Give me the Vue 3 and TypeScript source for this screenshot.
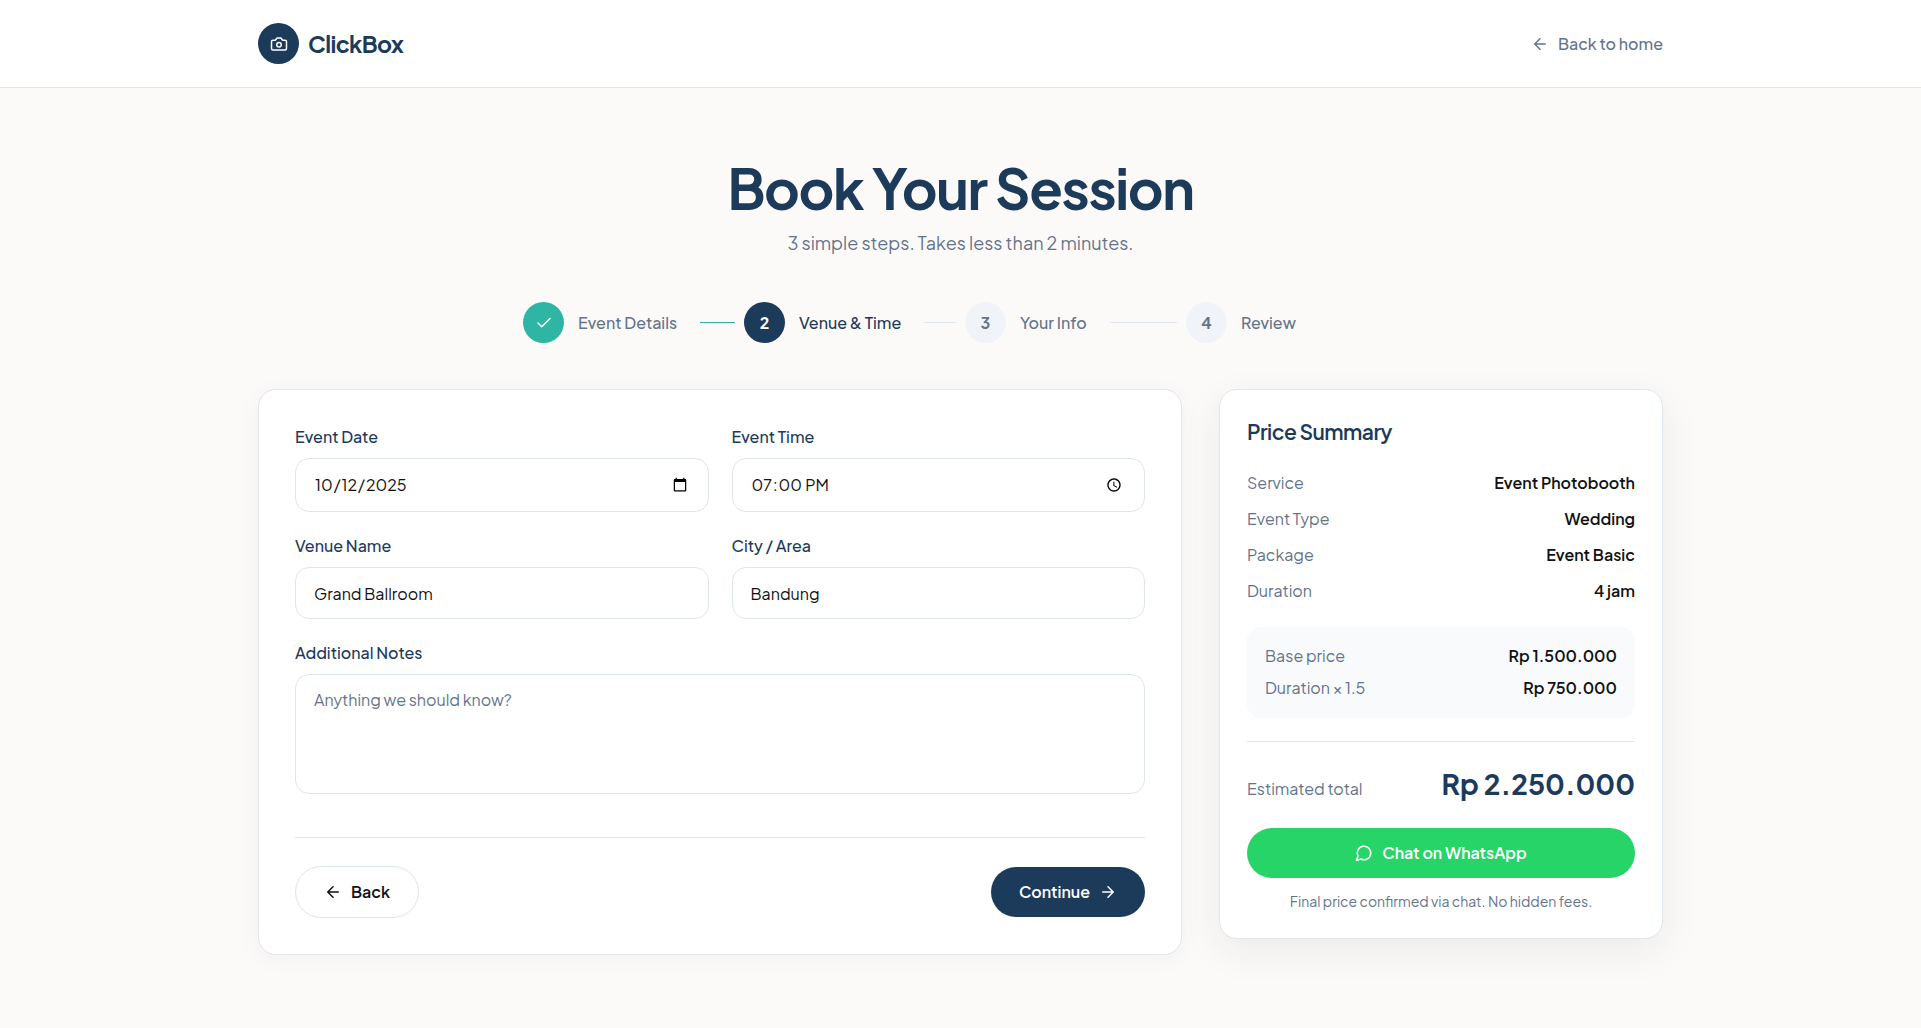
<script setup lang="ts">
import { ref } from 'vue'

interface Step {
  label: string
  state: 'done' | 'active' | 'todo'
}

interface Line {
  label: string
  value: string
}

const steps: Step[] = [
  { label: 'Event Details', state: 'done' },
  { label: 'Venue & Time', state: 'active' },
  { label: 'Your Info', state: 'todo' },
  { label: 'Review', state: 'todo' },
]

const details: Line[] = [
  { label: 'Service', value: 'Event Photobooth' },
  { label: 'Event Type', value: 'Wedding' },
  { label: 'Package', value: 'Event Basic' },
  { label: 'Duration', value: '4 jam' },
]

const charges: Line[] = [
  { label: 'Base price', value: 'Rp 1.500.000' },
  { label: 'Duration × 1.5', value: 'Rp 750.000' },
]

const date = ref('2025-10-12')
const time = ref('19:00')
const venue = ref('Grand Ballroom')
const city = ref('Bandung')
const notes = ref('')
</script>

<template>
  <div class="page">
    <header class="topbar">
      <div class="container topbar-inner">
        <a href="#" class="brand">
          <span class="brand-mark">
            <svg class="icon" viewBox="0 0 24 24" aria-hidden="true">
              <path d="M14.5 4h-5L7 7H4a2 2 0 0 0-2 2v9a2 2 0 0 0 2 2h16a2 2 0 0 0 2-2V9a2 2 0 0 0-2-2h-3l-2.500-3z" />
              <circle cx="12" cy="13" r="3" />
            </svg>
          </span>
          <span class="brand-name">ClickBox</span>
        </a>
        <a href="#" class="home-link">
          <svg class="icon" viewBox="0 0 24 24" aria-hidden="true"><path d="m12 19-7-7 7-7M19 12H5" /></svg>
          Back to home
        </a>
      </div>
    </header>

    <main class="container main">
      <div class="intro">
        <h1>Book Your Session</h1>
        <p>3 simple steps. Takes less than 2 minutes.</p>
      </div>

      <ol class="stepper">
        <li v-for="(step, i) in steps" :key="step.label" class="step" :class="step.state">
          <span class="bullet">
            <svg v-if="step.state === 'done'" class="icon" viewBox="0 0 24 24" aria-hidden="true"><path d="M20 6 9 17l-5-5" /></svg>
            <template v-else>{{ i + 1 }}</template>
          </span>
          <span class="step-label">{{ step.label }}</span>
          <span v-if="i < steps.length - 1" class="rule"></span>
        </li>
      </ol>

      <div class="columns">
        <form class="card form-card" @submit.prevent>
          <div class="fields">
            <div class="field">
              <label for="date">Event Date</label>
              <input id="date" v-model="date" class="control picker" type="date" />
            </div>
            <div class="field">
              <label for="time">Event Time</label>
              <input id="time" v-model="time" class="control picker" type="time" />
            </div>
            <div class="field">
              <label for="venue">Venue Name</label>
              <input id="venue" v-model="venue" class="control" type="text" />
            </div>
            <div class="field">
              <label for="city">City / Area</label>
              <input id="city" v-model="city" class="control" type="text" />
            </div>
            <div class="field wide">
              <label for="notes">Additional Notes</label>
              <textarea id="notes" v-model="notes" class="control area" placeholder="Anything we should know?"></textarea>
            </div>
          </div>
          <div class="actions">
            <button type="button" class="btn outline">
              <svg class="icon" viewBox="0 0 24 24" aria-hidden="true"><path d="m12 19-7-7 7-7M19 12H5" /></svg>
              Back
            </button>
            <button type="submit" class="btn primary">
              Continue
              <svg class="icon" viewBox="0 0 24 24" aria-hidden="true"><path d="M5 12h14M12 5l7 7-7 7" /></svg>
            </button>
          </div>
        </form>

        <aside class="card summary">
          <h2>Price Summary</h2>
          <dl class="details">
            <div v-for="line in details" :key="line.label" class="line">
              <dt>{{ line.label }}</dt>
              <dd>{{ line.value }}</dd>
            </div>
          </dl>
          <dl class="charges">
            <div v-for="line in charges" :key="line.label" class="line">
              <dt>{{ line.label }}</dt>
              <dd>{{ line.value }}</dd>
            </div>
          </dl>
          <div class="total">
            <span class="total-label">Estimated total</span>
            <strong>Rp 2.250.000</strong>
          </div>
          <button type="button" class="btn chat">
            <svg class="icon" viewBox="0 0 24 24" aria-hidden="true"><path d="M7.900 20A9 9 0 1 0 4 16.100L2 22Z" /></svg>
            Chat on WhatsApp
          </button>
          <p class="note">Final price confirmed via chat. No hidden fees.</p>
        </aside>
      </div>
    </main>
  </div>
</template>

<style>
body {
  background: #fcfaf8;
}
</style>

<style scoped>
.page {
  --navy: #1c3a5a;
  --muted: #64748b;
  --line: #dfe6ee;
  min-height: 100vh;
  font-family: "Plus Jakarta Sans", Inter, "Liberation Sans", sans-serif;
  font-size: 16px;
  line-height: 22px;
  color: #111;
}

.page *,
.page *::before {
  box-sizing: border-box;
}

.container {
  max-width: 1459px;
  margin: 0 auto;
  padding: 0 27px;
}

.icon {
  width: 18px;
  height: 18px;
  flex: none;
  fill: none;
  stroke: currentColor;
  stroke-width: 2;
  stroke-linecap: round;
  stroke-linejoin: round;
}

.topbar {
  background: #fff;
  border-bottom: 1px solid var(--line);
}

.topbar-inner {
  display: flex;
  align-items: center;
  justify-content: space-between;
  padding-top: 23px;
  padding-bottom: 23px;
}

.brand {
  display: flex;
  align-items: center;
  gap: 9px;
  color: var(--navy);
  text-decoration: none;
}

.brand-mark {
  display: grid;
  place-items: center;
  width: 41px;
  height: 41px;
  border-radius: 50%;
  background: var(--navy);
  color: #fff;
}

.brand-name {
  font-size: 23px;
  font-weight: 700;
  letter-spacing: -0.025em;
}

.home-link {
  display: flex;
  align-items: center;
  gap: 9px;
  color: var(--muted);
  font-weight: 500;
  text-decoration: none;
}

.main {
  padding-top: 70px;
  padding-bottom: 73px;
}

.intro {
  text-align: center;
}

h1 {
  margin: 0;
  font-size: 55px;
  line-height: 60px;
  font-weight: 700;
  letter-spacing: -0.025em;
  color: var(--navy);
}

.intro p {
  margin: 11px 0 0;
  font-size: 18px;
  line-height: 28px;
  color: var(--muted);
}

.stepper {
  display: flex;
  gap: 9px;
  max-width: 875px;
  margin: 45px auto 46px;
  padding: 0;
  list-style: none;
}

.step {
  flex: 1 1 0;
  display: flex;
  align-items: center;
  color: var(--muted);
  font-weight: 500;
  white-space: nowrap;
}

.bullet {
  flex: none;
  display: grid;
  place-items: center;
  width: 41px;
  height: 41px;
  margin-right: 14px;
  border-radius: 50%;
  background: #f0f4f8;
  font-weight: 700;
}

.rule {
  flex: 1;
  height: 1px;
  margin-left: 23px;
  background: var(--line);
}

.done .bullet {
  background: #2eb5a3;
  color: #fff;
}

.done .rule {
  background: #2eb5a3;
}

.active {
  color: var(--navy);
}

.active .bullet {
  background: var(--navy);
  color: #fff;
}

.columns {
  display: grid;
  grid-template-columns: minmax(0, 924fr) minmax(0, 444fr);
  align-items: start;
  gap: 37px;
}

.card {
  background: #fff;
  border: 1px solid var(--line);
  border-radius: 18px;
}

.form-card {
  padding: 36px;
  box-shadow: 0 4px 24px rgba(28, 40, 50, 0.04);
}

.fields {
  display: grid;
  grid-template-columns: 1fr 1fr;
  gap: 23px;
}

.field {
  display: flex;
  flex-direction: column;
  gap: 10px;
}

.wide {
  grid-column: 1 / -1;
}

label {
  font-weight: 500;
  color: var(--navy);
}

.control {
  width: 100%;
  height: 52px;
  padding: 14px 18px;
  border: 1px solid var(--line);
  border-radius: 14px;
  background: #fff;
  color: #111;
  font: inherit;
}

.picker {
  height: 54px;
}

.area {
  display: block;
  height: 120px;
  resize: none;
}

.area::placeholder {
  color: var(--muted);
}

.actions {
  display: flex;
  align-items: center;
  justify-content: space-between;
  margin-top: 43px;
  padding-top: 28px;
  border-top: 1px solid var(--line);
}

.btn {
  display: flex;
  align-items: center;
  justify-content: center;
  gap: 9px;
  height: 50px;
  padding: 0 28px;
  border: 0;
  border-radius: 26px;
  color: #fff;
  font: inherit;
  font-weight: 600;
  cursor: pointer;
}

.outline {
  height: 52px;
  border: 1px solid var(--line);
  background: #fff;
  color: #111;
}

.primary {
  background: var(--navy);
}

.summary {
  padding: 27px;
  box-shadow: 0 12px 40px rgba(28, 40, 50, 0.07);
}

h2 {
  margin: 0 0 25px;
  font-size: 21px;
  line-height: 30px;
  font-weight: 600;
  letter-spacing: -0.025em;
  color: var(--navy);
}

dl,
dd {
  margin: 0;
}

.details,
.charges {
  display: flex;
  flex-direction: column;
}

.details {
  gap: 14px;
}

.charges {
  gap: 10px;
  margin: 25px 0 23px;
  padding: 18px 18px 19px;
  border-radius: 14px;
  background: #f9fafc;
}

.line,
.total {
  display: flex;
  justify-content: space-between;
}

dt,
.total-label {
  color: var(--muted);
}

dd {
  font-weight: 600;
}

.total {
  align-items: baseline;
  padding: 23px 0 26px;
  border-top: 1px solid var(--line);
}

.total strong {
  font-size: 28px;
  line-height: 37px;
  font-weight: 700;
  color: var(--navy);
}

.chat {
  width: 100%;
  background: #27d468;
}

.note {
  margin: 13px 0 0;
  font-size: 14px;
  line-height: 20px;
  text-align: center;
  color: var(--muted);
}
</style>
